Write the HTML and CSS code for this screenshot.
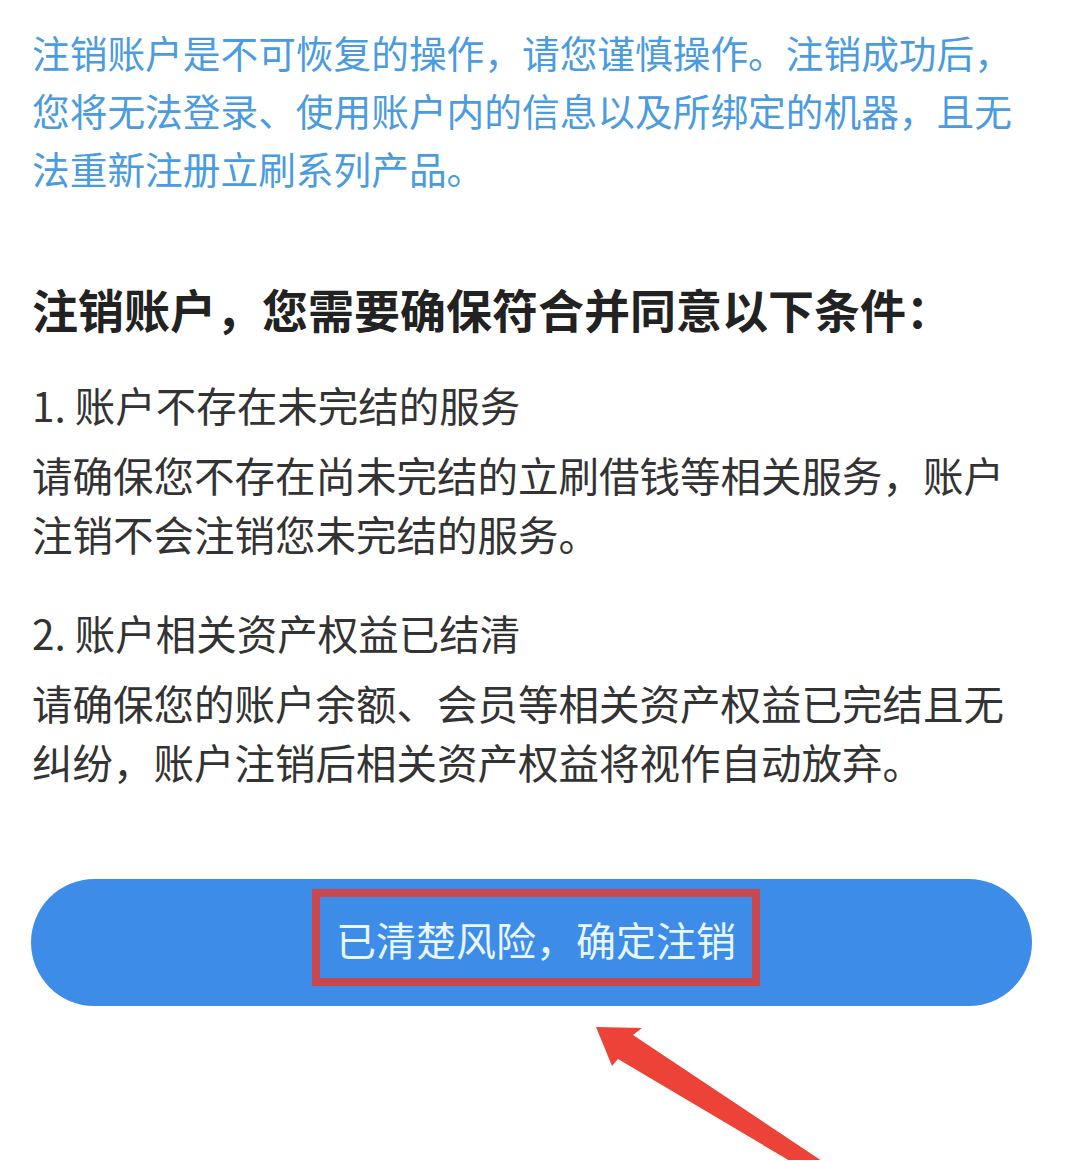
FILE: index.html
```html
<!DOCTYPE html>
<html lang="zh-CN">
<head>
    <meta charset="UTF-8">
    <meta name="viewport" content="width=device-width, initial-scale=1.0">
    <title>注销账户</title>
    <link rel="stylesheet" href="styles.css">
</head>
<body>
    <div id="page">
        <p class="warning">注销账户是不可恢复的操作，请您谨慎操作。注销成功后，您将无法登录、使用账户内的信息以及所绑定的机器，且无法重新注册立刷系列产品。</p>

        <h2 class="title">注销账户，您需要确保符合并同意以下条件：</h2>

        <div class="term">
            <div class="term-name">1. 账户不存在未完结的服务</div>
            <p class="term-desc">请确保您不存在尚未完结的立刷借钱等相关服务，账户注销不会注销您未完结的服务。</p>
        </div>
        <div class="term">
            <div class="term-name">2. 账户相关资产权益已结清</div>
            <p class="term-desc">请确保您的账户余额、会员等相关资产权益已完结且无纠纷，账户注销后相关资产权益将视作自动放弃。</p>
        </div>

        <div class="confirm">
            <span class="mark">已清楚风险，确定注销</span>
        </div>

        <svg class="arrow" width="260" height="150" viewBox="0 0 260 150">
            <polygon points="6,17 52,18 43,25 232,151 200,151 28,49 22,56" fill="#ec4238"/>
        </svg>
    </div>
</body>
</html>
```

FILE: styles.css
```css
body {
    margin: 0;
    padding: 0;
    background: #fff;
    font-family: "Noto Sans CJK SC", "Noto Sans", sans-serif;
    overflow: hidden;
}
#page {
    position: relative;
    height: 1161px;
    padding: 23px 0 0 32px;
    box-sizing: border-box;
}
.warning {
    margin: 0;
    width: 1010px;
    font-size: 37.7px;
    line-height: 58px;
    color: #4b9bdf;
}
.title {
    margin: 81px 0 0;
    font-size: 46px;
    line-height: 60px;
    font-weight: bold;
    color: #222;
}
.term {
    margin-top: 37px;
}
.term + .term {
    margin-top: 40px;
}
.term-name {
    font-size: 40.5px;
    line-height: 59px;
    color: #333;
}
.term-desc {
    margin: 11px 0 0;
    width: 995px;
    font-size: 40.5px;
    line-height: 59px;
    color: #333;
}
.confirm {
    margin: 88px 0 0 -1px;
    width: 1001px;
    height: 127px;
    border-radius: 64px;
    background: #3d8ce8;
    display: flex;
    align-items: center;
    justify-content: center;
}
.mark {
    margin: 0 0 10px 9px;
    padding: 4px 16px 0;
    line-height: 77px;
    border: 8px solid #c9474f;
    font-size: 40px;
    color: #e8f7ff;
}
.arrow {
    position: absolute;
    left: 590px;
    top: 1010px;
}
```
